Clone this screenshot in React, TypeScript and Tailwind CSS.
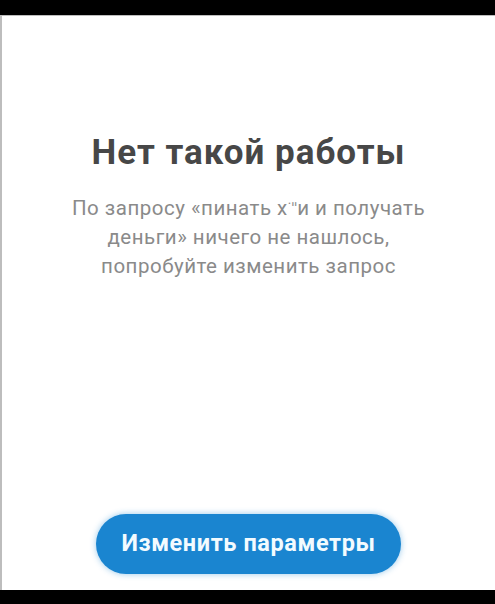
export default function App() {
  return (
    <div className="h-[604px] w-[495px] bg-black flex flex-col pt-[15px] pb-[14px] font-['Roboto','Noto_Sans',sans-serif]">
      <div className="flex-1 flex flex-col items-center bg-white border-t border-l-2 border-[#bdbdbd]">
        <h1 className="mt-[116px] text-[35px] leading-[42px] font-bold text-[#474747] tracking-[1px]">
          Нет такой работы
        </h1>
        <p className="mt-[20px] text-center text-[20.5px] leading-[29px] text-[#8a8a8a] tracking-[0.5px]">
          По запросу «пинать х<span className="text-[14px] align-top">˙ˈˈ</span>и и получать
          <br />
          деньги» ничего не нашлось,
          <br />
          попробуйте изменить запрос
        </p>
        <div className="flex-1" />
        <button className="mb-[16px] h-[60px] w-[305px] rounded-full bg-[#1a85d0] text-[#f2fbff] text-[23.5px] font-bold tracking-[0.6px] shadow-[0_0_6px_rgba(26,133,208,0.45)]">
          Изменить параметры
        </button>
      </div>
    </div>
  );
}
